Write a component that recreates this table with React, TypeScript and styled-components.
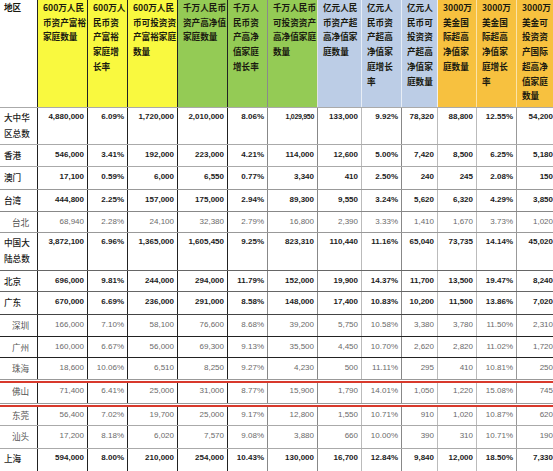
import React from 'react';
import styled, { createGlobalStyle } from 'styled-components';

const Global = createGlobalStyle`
  html, body { margin: 0; padding: 0; background: #fff; overflow: hidden; }
  body { width: 553px; height: 471px; }
`;

const WIDTHS = [38, 50, 40, 50, 50, 40, 50, 44, 40, 36, 39, 40, 40];
const COLS = WIDTHS.map((w) => `${w}px`).join(' ');

const HEAD_BORDER = ['#222', '#222', '#222', '#222', '#222', '#8a8a8a', '#e2e2e2', '#e8eef6', '#e8eef6', '#f0f0f0', '#fbe3a8', '#fbe3a8', '#fbe3a8'];
const DATA_BORDER = ['#222', '#222', '#222', '#222', '#222', '#888', '#888', '#bbb', '#888', '#bbb', '#bbb', '#999', '#999'];
const GROUP_BG = ['#fff', '#f9f93f', '#f9f93f', '#f9f93f', '#94cb55', '#94cb55', '#94cb55', '#bccde6', '#bccde6', '#bccde6', '#f7c13f', '#f7c13f', '#f7c13f'];

const Sheet = styled.div`
  width: 557px;
  font-family: 'Liberation Sans', Arial, sans-serif;
`;

const Row = styled.div<{ $h: number; $line: string; $pad?: number; $lh?: number }>`
  display: grid;
  grid-template-columns: ${COLS};
  height: ${(p) => p.$h}px;
  box-sizing: border-box;
  border-bottom: 1px solid ${(p) => p.$line};
  --pad: ${(p) => (p.$pad ?? 2)}px;
  --lh: ${(p) => (p.$lh ?? 16)}px;
`;

const HeadCell = styled.div<{ $i: number }>`
  box-sizing: border-box;
  background-color: ${(p) => GROUP_BG[p.$i]};
  border-right: 1px solid ${(p) => HEAD_BORDER[p.$i]};
  padding: 0 0 0 ${(p) => (p.$i === 0 ? 4 : 5)}px;
  font-family: 'Noto Sans CJK SC', 'Liberation Sans', sans-serif;
  font-size: 8.6px;
  font-weight: 700;
  line-height: 14.7px;
  color: #1a1a10;
  white-space: nowrap;
  overflow: hidden;
`;

const LabelCell = styled.div<{ $sub: boolean }>`
  box-sizing: border-box;
  border-right: 1px solid #222;
  padding: var(--pad) 0 0 ${(p) => (p.$sub ? 12 : 4)}px;
  line-height: var(--lh);
  font-family: 'Noto Sans CJK SC', 'Liberation Sans', sans-serif;
  font-size: 8.6px;
  font-weight: ${(p) => (p.$sub ? 400 : 500)};
  color: ${(p) => (p.$sub ? '#555' : '#1c1c1c')};
  white-space: nowrap;
  overflow: hidden;
`;

const NumCell = styled.div<{ $i: number; $sub: boolean; $tight?: boolean }>`
  box-sizing: border-box;
  border-right: 1px solid ${(p) => DATA_BORDER[p.$i]};
  padding: var(--pad) 3px 0 0;
  line-height: var(--lh);
  text-align: right;
  font-size: ${(p) => (p.$tight ? 7 : 8)}px;
  letter-spacing: ${(p) => (p.$tight ? -0.3 : 0)}px;
  font-weight: ${(p) => (p.$sub ? 400 : 700)};
  color: ${(p) => (p.$sub ? '#6a6a6a' : '#1c1c1c')};
  white-space: nowrap;
  overflow: hidden;
`;

const RedRule = styled.div`
  height: 2px;
  margin-top: 1px;
  background: #d8392c;
`;

const HEADERS: string[][] = [
  ['地区'],
  ['600万人民', '币资产富裕', '家庭数量'],
  ['600万人', '民币资', '产富裕', '家庭增', '长率'],
  ['600万人民', '币可投资资', '产富裕家庭', '数量'],
  ['千万人民币', '资产高净值', '家庭数量'],
  ['千万人', '民币资', '产高净', '值家庭', '增长率'],
  ['千万人民币', '可投资资产', '高净值家庭', '数量'],
  ['亿元人民', '币资产超', '高净值家', '庭数量'],
  ['亿元人', '民币资', '产超高', '净值家', '庭增长', '率'],
  ['亿元人', '民币可', '投资资', '产超高', '净值家', '庭数量'],
  ['3000万', '美金国', '际超高', '净值家', '庭数量'],
  ['3000万', '美金国', '际超高', '净值家', '庭增长', '率'],
  ['3000万', '美金可', '投资资', '产国际', '超高净', '值家庭', '数量'],
];

type RowData = {
  label: string[];
  sub: boolean;
  h: number;
  line: string;
  pad?: number;
  values: string[];
  redAfter?: boolean;
};

const ROWS: RowData[] = [
  { label: ['大中华', '区总数'], sub: false, h: 37, line: '#aaa', pad: 1, values: ['4,880,000', '6.09%', '1,720,000', '2,010,000', '8.06%', '1,029,950', '133,000', '9.92%', '78,320', '88,800', '12.55%', '54,200'] },
  { label: ['香港'], sub: false, h: 22, line: '#aaa', values: ['546,000', '3.41%', '192,000', '223,000', '4.21%', '114,000', '12,600', '5.00%', '7,420', '8,500', '6.25%', '5,180'] },
  { label: ['澳门'], sub: false, h: 23, line: '#999', values: ['17,100', '0.59%', '6,000', '6,550', '0.77%', '3,340', '410', '2.50%', '240', '245', '2.08%', '150'] },
  { label: ['台湾'], sub: false, h: 22, line: '#888', values: ['444,800', '2.25%', '157,000', '175,000', '2.94%', '89,300', '9,550', '3.24%', '5,620', '6,320', '4.29%', '3,850'] },
  { label: ['台北'], sub: true, h: 21, line: '#999', values: ['68,940', '2.28%', '24,100', '32,380', '2.79%', '16,800', '2,390', '3.33%', '1,410', '1,670', '3.73%', '1,020'] },
  { label: ['中国大', '陆总数'], sub: false, h: 38, line: '#666', pad: 1, values: ['3,872,100', '6.96%', '1,365,000', '1,605,450', '9.25%', '823,310', '110,440', '11.16%', '65,040', '73,735', '14.14%', '45,020'] },
  { label: ['北京'], sub: false, h: 21, line: '#666', values: ['696,000', '9.81%', '244,000', '294,000', '11.79%', '152,000', '19,900', '14.37%', '11,700', '13,500', '19.47%', '8,240'] },
  { label: ['广东'], sub: false, h: 23, line: '#444', values: ['670,000', '6.69%', '236,000', '291,000', '8.58%', '148,000', '17,400', '10.83%', '10,200', '11,500', '13.86%', '7,020'] },
  { label: ['深圳'], sub: true, h: 22, line: '#222', values: ['166,000', '7.10%', '58,100', '76,600', '8.68%', '39,200', '5,750', '10.58%', '3,380', '3,780', '11.50%', '2,310'] },
  { label: ['广州'], sub: true, h: 21, line: '#222', values: ['160,000', '6.67%', '56,000', '69,300', '9.13%', '35,500', '4,450', '10.70%', '2,620', '2,820', '11.02%', '1,720'] },
  { label: ['珠海'], sub: true, h: 22, line: '#999', values: ['18,600', '10.06%', '6,510', '8,250', '9.27%', '4,230', '500', '11.11%', '295', '410', '10.81%', '250'], redAfter: true },
  { label: ['佛山'], sub: true, h: 21, line: '#999', pad: 0, values: ['71,400', '6.41%', '25,000', '31,000', '8.77%', '15,900', '1,790', '14.01%', '1,050', '1,220', '15.08%', '745'], redAfter: true },
  { label: ['东莞'], sub: true, h: 19, line: '#aaa', pad: 0, values: ['56,400', '7.02%', '19,700', '25,000', '9.17%', '12,800', '1,550', '10.71%', '910', '1,020', '10.87%', '620'] },
  { label: ['汕头'], sub: true, h: 23, line: '#aaa', values: ['17,200', '8.18%', '6,020', '7,570', '9.08%', '3,880', '660', '10.00%', '390', '310', '10.71%', '190'] },
  { label: ['上海'], sub: false, h: 24, line: '#aaa', pad: 1, values: ['594,000', '8.00%', '210,000', '254,000', '10.43%', '130,000', '16,700', '12.84%', '9,840', '12,000', '18.50%', '7,330'] },
];

const Lines: React.FC<{ lines: string[] }> = ({ lines }) => (
  <>
    {lines.map((l, k) => (
      <React.Fragment key={k}>
        {k > 0 && <br />}
        {l}
      </React.Fragment>
    ))}
  </>
);

export default function App() {
  return (
    <>
      <Global />
      <Sheet>
        <Row $h={108} $line="#aaa">
          {HEADERS.map((h, i) => (
            <HeadCell key={i} $i={i}>
              <Lines lines={h} />
            </HeadCell>
          ))}
        </Row>
        {ROWS.map((r, ri) => (
          <React.Fragment key={ri}>
            <Row $h={r.h} $line={r.line} $pad={r.pad}>
              <LabelCell $sub={r.sub}>
                <Lines lines={r.label} />
              </LabelCell>
              {r.values.map((v, vi) => (
                <NumCell key={vi} $i={vi + 1} $sub={r.sub} $tight={v === '1,029,950'}>
                  {v}
                </NumCell>
              ))}
            </Row>
            {r.redAfter && <RedRule />}
          </React.Fragment>
        ))}
      </Sheet>
    </>
  );
}
